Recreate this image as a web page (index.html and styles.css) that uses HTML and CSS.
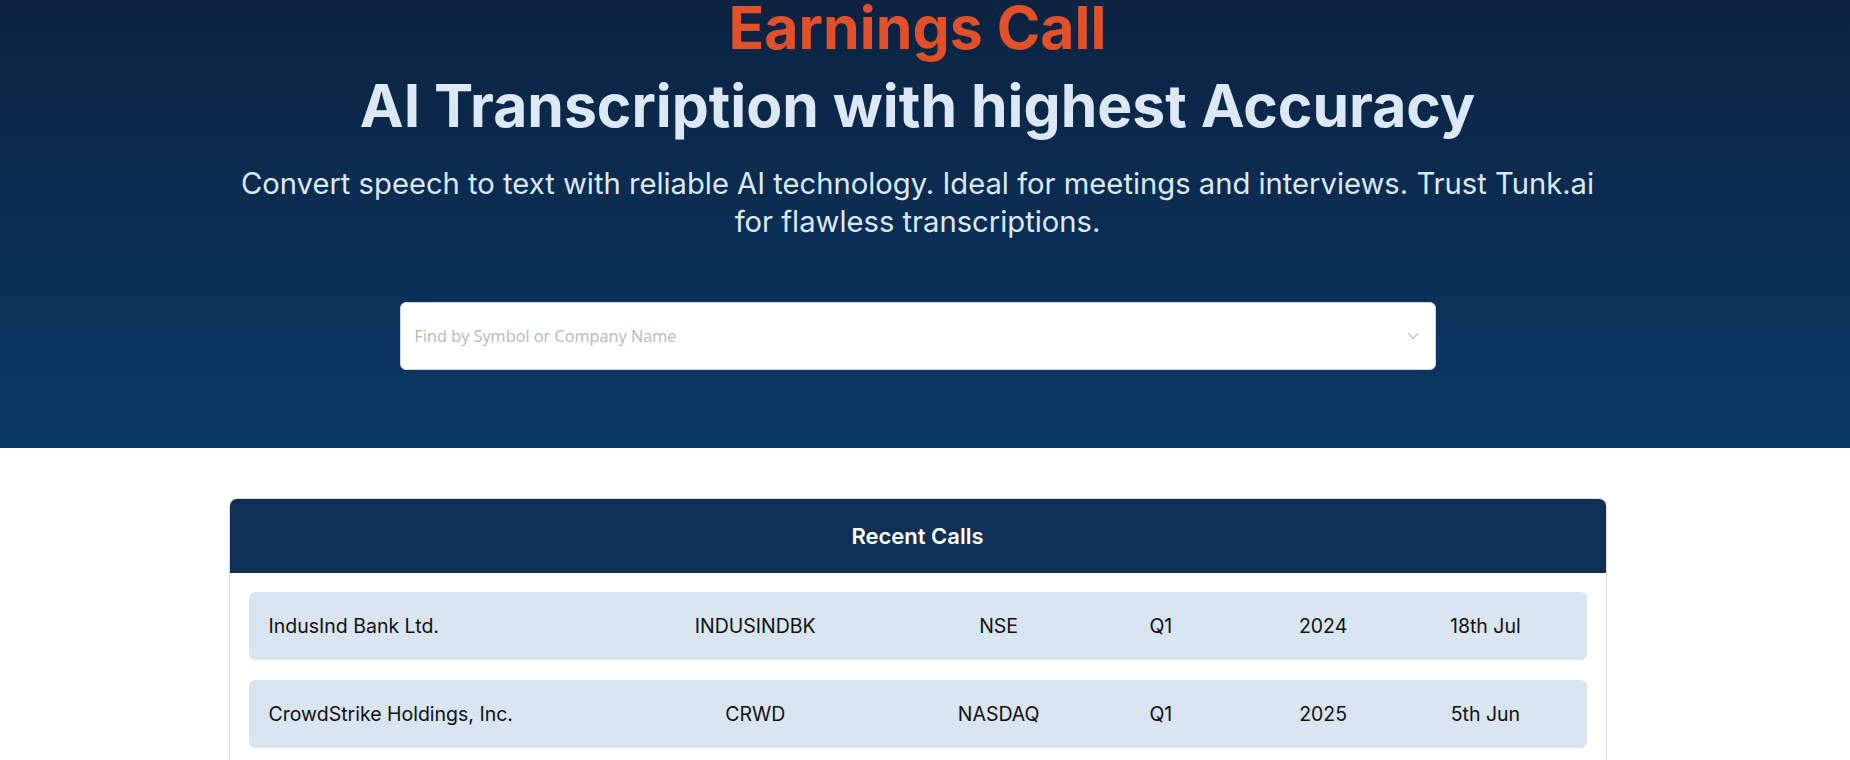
FILE: index.html
```html
<!DOCTYPE html>
<html lang="en">

<head>
  <meta charset="UTF-8">
  <meta name="viewport" content="width=device-width, initial-scale=1.0">
  <title>Earnings Call Transcription</title>
  <link rel="stylesheet" href="styles.css">
</head>

<body>
  <section class="hero">
    <div class="hero-inner">
      <h1 class="hero-kicker">Earnings Call</h1>
      <h2 class="hero-title">AI Transcription with highest Accuracy</h2>
      <p class="hero-text">
        Convert speech to text with reliable AI technology. Ideal for meetings and interviews. Trust Tunk.ai
        for flawless transcriptions.
      </p>

      <div class="search-box">
        <input type="text" class="search-input" placeholder="Find by Symbol or Company Name" />
        <svg class="search-chevron" width="12" height="8" viewBox="0 0 12 8" fill="none">
          <path d="M1 1.2 6 6.5 11 1.2" stroke="#bcbcbc" stroke-width="1.2" />
        </svg>
      </div>
    </div>
  </section>

  <main class="content">
    <div class="calls-card">
      <div class="calls-header">Recent Calls</div>
      <div class="calls-list">
        <div class="call-row">
          <span class="call-name">IndusInd Bank Ltd.</span>
          <span>INDUSINDBK</span>
          <span>NSE</span>
          <span>Q1</span>
          <span>2024</span>
          <span>18th Jul</span>
        </div>
        <div class="call-row">
          <span class="call-name">CrowdStrike Holdings, Inc.</span>
          <span>CRWD</span>
          <span>NASDAQ</span>
          <span>Q1</span>
          <span>2025</span>
          <span>5th Jun</span>
        </div>
      </div>
    </div>
  </main>
</body>

</html>
```

FILE: styles.css
```css
:root {
  --hero-top: #0c2341;
  --hero-bottom: #0a3866;
  --accent-color: #e2502a;
  --hero-text: #dce8f5;
  --header-bg: #0f2f56;
  --row-bg: #d9e5f1;
  --border-color: #dcdcdc;
}

* {
  box-sizing: border-box;
  margin: 0;
  padding: 0;
}

body {
  font-family: 'Inter', 'Noto Sans', sans-serif;
  background-color: #ffffff;
  color: #111111;
}

.hero {
  background: linear-gradient(to bottom, var(--hero-top), var(--hero-bottom));
  padding: 0 15px 78px 0;
}

.hero-inner {
  display: flex;
  flex-direction: column;
  align-items: center;
  text-align: center;
}

.hero-kicker {
  color: var(--accent-color);
  font-size: 59px;
  font-weight: 700;
  line-height: 56px;
  margin-bottom: 15px;
}

.hero-title {
  color: var(--hero-text);
  font-size: 58.8px;
  font-weight: 700;
  line-height: 1.2;
  margin-bottom: 23px;
}

.hero-text {
  color: var(--hero-text);
  font-size: 29.2px;
  line-height: 38px;
  max-width: 1385px;
  margin-bottom: 61px;
}

.search-box {
  width: 1036px;
  height: 68px;
  background-color: #ffffff;
  border: 1px solid #c9d5e3;
  border-radius: 6px;
  display: flex;
  align-items: center;
  padding: 0 16px 0 14px;
}

.search-input {
  flex: 1;
  border: none;
  outline: none;
  background: transparent;
  font-family: 'Open Sans', sans-serif;
  font-size: 16.3px;
  color: #333333;
}

.search-input::placeholder {
  color: #b9b9b9;
}

.search-chevron {
  display: block;
}

.content {
  display: flex;
  justify-content: center;
  padding: 50px 15px 40px 0;
}

.calls-card {
  width: 1378px;
  border: 1px solid var(--border-color);
  border-radius: 8px;
  overflow: hidden;
}

.calls-header {
  background-color: var(--header-bg);
  color: #ffffff;
  text-align: center;
  font-size: 22px;
  font-weight: 600;
  height: 74px;
  display: flex;
  align-items: center;
  justify-content: center;
}

.calls-list {
  display: flex;
  flex-direction: column;
  gap: 20px;
  padding: 19px 19px 20px;
}

.call-row {
  display: grid;
  grid-template-columns: 2fr 2fr 1fr 1fr 1fr 1fr;
  align-items: center;
  height: 68px;
  padding: 0 20px;
  background-color: var(--row-bg);
  border-radius: 6px;
  font-size: 19.5px;
  text-align: center;
}

.call-row .call-name {
  text-align: left;
}
```
